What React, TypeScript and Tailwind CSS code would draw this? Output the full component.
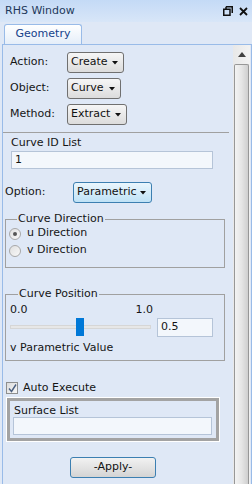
import React from "react";

const font = { fontFamily: '"DejaVu Sans", Verdana, sans-serif' };

function Drop({ label, w, active }: { label: string; w: string; active?: boolean }) {
    return (
        <div
            className={`${w} h-[21px] flex items-center justify-between pl-[3px] pr-[5px] rounded-[3px] border text-[11px] text-[#111] ${
                active
                    ? "border-[#3c7fb1] bg-linear-to-b from-[#eaf6fd] to-[#bfe2f6]"
                    : "border-[#707070] bg-linear-to-b from-[#f6f6f6] to-[#dcdcdc]"
            }`}
        >
            <span>{label}</span>
            <svg width="6" height="4" viewBox="0 0 6 4">
                <path d="M0 0h6L3 3.5z" fill="#111" />
            </svg>
        </div>
    );
}

function Radio({ checked, label }: { checked?: boolean; label: string }) {
    return (
        <div className="flex items-center gap-[6px] h-[17px]">
            <div className="w-[12px] h-[12px] rounded-full border border-[#a8a8a8] bg-linear-to-br from-[#e0e0e0] to-[#f8f8f8] flex items-center justify-center">
                {checked && <div className="w-[4px] h-[4px] rounded-full bg-[#555]" />}
            </div>
            <span>{label}</span>
        </div>
    );
}

export default function App() {
    return (
        <div style={font} className="w-[252px] h-[484px] overflow-hidden bg-[#dfe8f6] text-[11px] text-[#151515] flex flex-col">
            <div className="h-[22px] shrink-0 flex items-center justify-between pl-[5px] pr-[4px] bg-linear-to-b from-[#c4daf6] to-[#d8e6f8]">
                <span className="text-[#1e395b] text-[11px]">RHS Window</span>
                <div className="flex items-center gap-[6px]">
                    <svg width="10" height="10" viewBox="0 0 10 10">
                        <path d="M3 0.75h6.25v6.25M3 0.75v2.5M0.75 3.25h6.25v6h-6.25z" fill="none" stroke="#111" strokeWidth="1.5" />
                    </svg>
                    <svg width="9" height="9" viewBox="0 0 9 9">
                        <path d="M1 1l7 7M8 1l-7 7" stroke="#111" strokeWidth="1.8" />
                    </svg>
                </div>
            </div>
            <div className="h-[22px] shrink-0 flex items-end pl-[4px]">
                <div className="w-[78px] h-[20px] rounded-t-[3px] border border-b-0 border-[#99bbe8] bg-linear-to-b from-[#ffffff] to-[#e5eef9] flex items-center justify-center text-[#15428b] text-[11px]">
                    Geometry
                </div>
            </div>
            <div className="flex-1 flex ml-[2px] border-l border-t border-r border-[#99bbe8]">
                <div className="flex-1 flex flex-col">
                    <div className="flex flex-col gap-[5px] pt-[7px] pl-[7px]">
                        <div className="flex items-center">
                            <span className="w-[57px]">Action:</span>
                            <Drop label="Create" w="w-[57px]" />
                        </div>
                        <div className="flex items-center">
                            <span className="w-[57px]">Object:</span>
                            <Drop label="Curve" w="w-[54px]" />
                        </div>
                        <div className="flex items-center">
                            <span className="w-[57px]">Method:</span>
                            <Drop label="Extract" w="w-[60px]" />
                        </div>
                    </div>
                    <div className="h-px bg-[#a0a0a0] mt-[7px] mr-[4px]" />
                    <div className="pl-[8px] pt-[2px]">
                        <div className="h-[15px]">Curve ID List</div>
                        <div className="w-[202px] h-[18px] mt-[1px] border border-[#b5c4d8] bg-[#f3f7fc] flex items-center pl-[3px]">1</div>
                    </div>
                    <div className="flex items-center mt-[13px] pl-[2px]">
                        <span className="w-[68px]">Option:</span>
                        <Drop label="Parametric" w="w-[79px]" active />
                    </div>
                    <fieldset className="ml-[2px] mr-[8px] mt-[10px] border border-[#a0a0a0] h-[55px] px-[3px] pb-[4px]">
                        <legend className="ml-[8px] px-[1px] leading-[12px]">Curve Direction</legend>
                        <Radio checked label="u Direction" />
                        <Radio label="v Direction" />
                    </fieldset>
                    <fieldset className="ml-[2px] mr-[8px] mt-[20px] border border-[#a0a0a0] h-[73px] pl-[4px] pr-[5px]">
                        <legend className="ml-[8px] px-[1px] leading-[12px]">Curve Position</legend>
                        <div className="flex justify-between w-[143px] h-[14px] mt-[2px]">
                            <span>0.0</span>
                            <span>1.0</span>
                        </div>
                        <div className="flex items-center mt-[1px]">
                            <div className="relative w-[141px] h-[20px] flex items-center">
                                <div className="w-full h-[4px] bg-[#e7e7e7] border border-[#d6d6d6]" />
                                <div className="absolute left-[66px] top-[1px] w-[8px] h-[18px] bg-[#0078d7]" />
                            </div>
                            <div className="ml-[6px] w-[56px] h-[19px] border border-[#b5c4d8] bg-[#f3f7fc] flex items-center pl-[3px]">0.5</div>
                        </div>
                        <div className="mt-[3px]">v Parametric Value</div>
                    </fieldset>
                    <div className="flex items-center gap-[5px] mt-[19px] pl-[3px]">
                        <div className="w-[12px] h-[12px] border border-[#8e8f8f] bg-linear-to-br from-[#dcdcdc] to-[#f7f7f7] flex items-center justify-center">
                            <svg width="9" height="9" viewBox="0 0 9 9">
                                <path d="M1 4.5l2.5 3L8 0.5" fill="none" stroke="#4a5f80" strokeWidth="1.4" />
                            </svg>
                        </div>
                        <span>Auto Execute</span>
                    </div>
                    <div className="ml-[4px] mt-[1px] w-[212px] h-[43px] border-[3px] border-[#a3a3a3] outline outline-white bg-[#dfe8f6] px-[3px]">
                        <div className="h-[16px] pl-[1px] pt-[4px] leading-[12px]">Surface List</div>
                        <div className="mt-[0px] w-[199px] h-[18px] border border-[#b5c4d8] bg-[#f3f7fc]" />
                    </div>
                    <div className="flex mt-[16px] pl-[67px]">
                        <div className="w-[86px] h-[21px] rounded-[3px] border border-[#3c7fb1] bg-linear-to-b from-[#f2f2f2] to-[#d4d4d4] flex items-center justify-center text-[#111]">
                            -Apply-
                        </div>
                    </div>
                </div>
                <div className="w-[17px] shrink-0 flex flex-col bg-linear-to-r from-[#e8e8e8] to-[#f2f2f2] mr-[1px]">
                    <div className="h-[19px] flex items-center justify-center">
                        <svg width="8" height="5" viewBox="0 0 8 5">
                            <path d="M0 5h8L4 0z" fill="#404040" />
                        </svg>
                    </div>
                    <div className="flex-1 mx-[1px] rounded-t-[2px] border border-b-0 border-[#979797] bg-linear-to-r from-[#f3f3f3] via-[#e6e6e6] to-[#cfcfcf]" />
                </div>
            </div>
        </div>
    );
}
